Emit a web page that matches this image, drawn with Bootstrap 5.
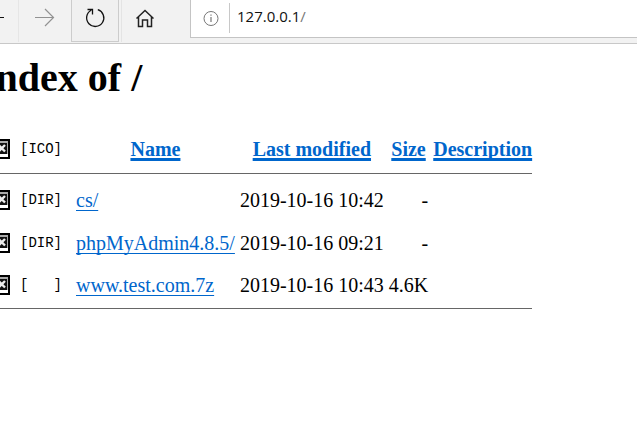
<!DOCTYPE html>
<html lang="en">
<head>
<meta charset="utf-8">
<meta name="viewport" content="width=device-width, initial-scale=1">
<title>Index of /</title>
<link href="https://cdn.jsdelivr.net/npm/bootstrap@5.3.0/dist/css/bootstrap.min.css" rel="stylesheet">
<style>
  body { font-family: "Liberation Serif", serif; font-size: 20px; line-height: 24px; color: #000; background: #fff; }
  .toolbar { height: 44px; background: #f2f2f2; border-bottom: 1px solid #c8c8c8; }
  .tool { width: 48px; height: 42px; margin-right: 2px; padding: 0; border: 0; background: transparent; color: #222; overflow: hidden; }
  .tool svg { display: block; }
  .tool-back { width: 19px; border-right: 1px solid #e6e6e6; }
  .tool-active { border: 1px solid #ccc; border-top: 0; background: #f0f0f0; }
  .tool-home { border-left: 1px solid #e4e4e4; }
  .address { height: 38px; margin-left: 19px; background: #fff; border: 1px solid #c4c4c4; border-width: 0 0 1px 1px; font: 15px/20px "Open Sans", sans-serif; }
  .site-info { width: 39px; height: 30px; margin-top: 3px; padding: 0 0 0 12px; border: 0; border-right: 1px solid #c8c8c8; background: transparent; }
  .site-info svg { display: block; }
  .url { padding: 6px 0 0 7px; color: #111; }
  .url span { color: #777; }
  .listing { margin-left: -20px; }
  h1 { font-size: 40px; line-height: 48px; padding-top: 10px; margin-bottom: 23px; }
  .files { border-collapse: collapse; }
  .files th, .files td { padding: 0 5px 0 0; height: 43px; vertical-align: middle; white-space: nowrap; }
  .files th { height: 48px; text-align: center; }
  .files th:last-child, .files td:last-child { padding-right: 0; }
  .files tbody { border-top: 1px solid #666; border-bottom: 1px solid #666; }
  .files tbody tr:first-child td { height: 48px; padding-top: 6px; }
  .files tbody tr:last-child td { height: 44px; padding-bottom: 2px; }
  .files a { color: #06c; text-decoration: underline 1px; text-underline-offset: 3px; text-decoration-skip-ink: none; }
  .files th a { text-decoration-thickness: 3px; text-underline-offset: 2px; }
  .kind { width: 91px; font: 14px/20px "Liberation Mono", monospace; white-space: pre; }
  .kind svg { flex: none; margin-right: 10px; }
</style>
<script src="https://cdn.jsdelivr.net/npm/bootstrap@5.3.0/dist/js/bootstrap.bundle.min.js"></script>
</head>
<body class="overflow-hidden">
<svg class="d-none" aria-hidden="true">
  <symbol id="missing" viewBox="0 0 20 20">
    <path d="M0 0h20v20H0z" fill="#000"/>
    <path d="M2 2h16v16H2z" fill="#fff"/>
    <path d="M2 2h16v2H2zM17 2h1v13h-1z" fill="#aaa"/>
    <path d="M3 4h14v11H3z" fill="#111"/>
    <path d="M8.500 6l6.500 6.500M15 6l-6.500 6.500" stroke="#eee" stroke-width="2.400"/>
  </symbol>
</svg>

<header class="toolbar d-flex align-items-start">
  <button type="button" class="tool tool-back" aria-label="Back">
    <svg width="18" height="42" fill="none" stroke="#111"><path d="M0 17.500h4"/></svg>
  </button>
  <button type="button" class="tool" aria-label="Forward" disabled>
    <svg width="48" height="42" fill="none" stroke="#929292" stroke-width="1.200"><path d="M14 17.500h18M24 9l8.500 8.500L24 26"/></svg>
  </button>
  <button type="button" class="tool tool-active" aria-label="Refresh">
    <svg width="46" height="41" fill="none" stroke="#111" stroke-width="1.300"><path d="M25.800 9.700a8.600 8.600 0 1 1-6.600.6M15.500 9.500h5v5"/></svg>
  </button>
  <button type="button" class="tool tool-home" aria-label="Home">
    <svg width="47" height="42" fill="none" stroke="#222" stroke-width="1.500"><path d="M14.500 18.500l8.500-8 8.500 8M16.500 17v9.500h4v-6.500h5v6.500h4V17"/></svg>
  </button>
  <div class="address d-flex align-items-start flex-grow-1">
    <button type="button" class="site-info" aria-label="Site information">
      <svg width="17" height="30" fill="none" stroke="#777"><circle cx="8" cy="15.500" r="7"/><path d="M8 14v5M8 11.500v1.300" stroke-width="1.200"/></svg>
    </button>
    <div class="url">127.0.0.1<span>/</span></div>
  </div>
</header>

<main class="listing">
  <h1 class="fw-bold">Index of /</h1>
  <table class="files">
    <thead>
      <tr>
        <th class="fw-normal" scope="col"><div class="kind d-flex align-items-center"><svg class="ms-2" width="22" height="20" viewBox="0 0 20 20" preserveAspectRatio="xMaxYMid"><use href="#missing"/></svg>[ICO]</div></th>
        <th scope="col"><a href="#name">Name</a></th>
        <th scope="col"><a href="#modified">Last modified</a></th>
        <th scope="col"><a href="#size">Size</a></th>
        <th scope="col"><a href="#description">Description</a></th>
      </tr>
    </thead>
    <tbody>
      <tr>
        <td><div class="kind d-flex align-items-center"><svg class="ms-2" width="22" height="20" viewBox="0 0 20 20" preserveAspectRatio="xMaxYMid"><use href="#missing"/></svg>[DIR]</div></td>
        <td><a href="#cs">cs/</a></td>
        <td>2019-10-16 10:42</td>
        <td class="text-end">-</td>
        <td></td>
      </tr>
      <tr>
        <td><div class="kind d-flex align-items-center"><svg class="ms-2" width="22" height="20" viewBox="0 0 20 20" preserveAspectRatio="xMaxYMid"><use href="#missing"/></svg>[DIR]</div></td>
        <td><a href="#phpmyadmin">phpMyAdmin4.8.5/</a></td>
        <td>2019-10-16 09:21</td>
        <td class="text-end">-</td>
        <td></td>
      </tr>
      <tr>
        <td><div class="kind d-flex align-items-center"><svg class="ms-2" width="22" height="20" viewBox="0 0 20 20" preserveAspectRatio="xMaxYMid"><use href="#missing"/></svg>[   ]</div></td>
        <td><a href="#archive">www.test.com.7z</a></td>
        <td>2019-10-16 10:43</td>
        <td class="text-end">4.6K</td>
        <td></td>
      </tr>
    </tbody>
  </table>
</main>
</body>
</html>
